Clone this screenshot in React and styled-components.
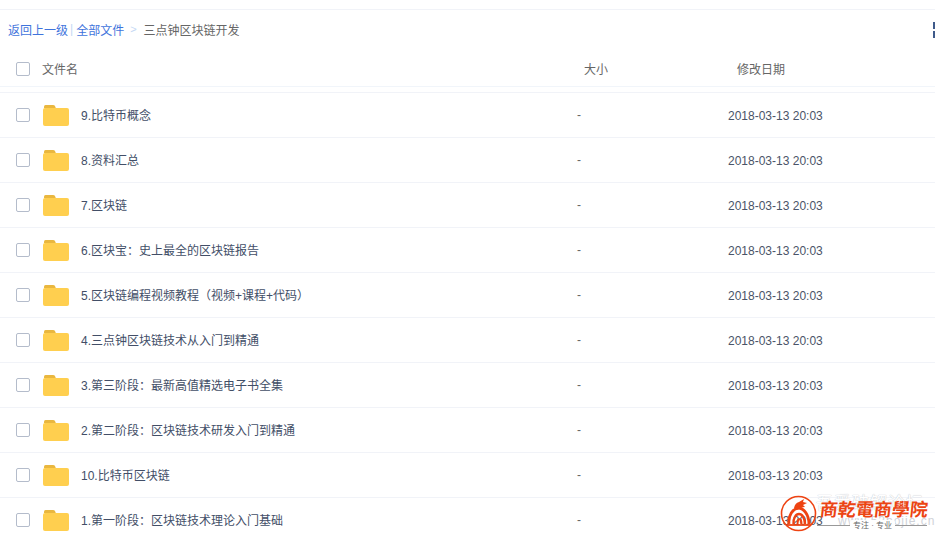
import React from "react";
import styled, { createGlobalStyle } from "styled-components";

const Global = createGlobalStyle`
  html, body { margin: 0; padding: 0; background: #fff; height: 539px; overflow: hidden; }
  body { font-family: "Liberation Sans", "Noto Sans CJK SC", sans-serif; }
`;
const Page = styled.div`
  position: relative; width: 935px; height: 539px; overflow: hidden; padding-top: 9px; box-sizing: border-box;
`;
const TopRule = styled.div`height: 1px; background: #f1f3f8;`;
const Crumbs = styled.div`
  height: 40px; box-sizing: border-box; padding: 0 0 2px 8px; display: flex; align-items: center; font-size: 12px; color: #666; position: relative;
`;
const CrumbLink = styled.span`color: #3f74dc;`;
const Bar = styled.span`color: #c4d8f4; margin: 0 3px 0 2px; font-size: 12px;`;
const Chevron = styled.span`color: #c4d8f4; margin: 0 7px 0 6px; font-size: 11px; font-family: "Liberation Sans", sans-serif;`;
const Grip = styled.div`
  position: absolute; right: 0; top: 12px; width: 2px; height: 16px;
  display: flex; flex-direction: column; justify-content: space-between;
  & > i { display: block; height: 7px; background: #3f5a8a; }
`;
const HeaderRow = styled.div`
  height: 36px; display: grid; grid-template-columns: 42px 542px 153px 1fr; align-items: center;
  font-size: 12px; color: #666; border-bottom: 1px solid #f1f5fa;
`;
const Gap = styled.div`height: 5px;`;
const Rule2 = styled.div`height: 1px; background: #f1f3f8;`;
const Row = styled.div`
  height: 44px; display: grid; grid-template-columns: 43px 38px 496px 151px 1fr; align-items: center;
  border-bottom: 1px solid #f1f3f8; font-size: 12px; color: #424e67; flex: none;
`;
const Box = styled.span`
  display: block; width: 14px; height: 14px; box-sizing: border-box; margin: ${(p) => (p.$head ? "2px" : "0")} 0 0 16px;
  border: 1px solid #b4bccb; border-radius: 2px; background: #fff;
`;
const HeadCell = styled.span`white-space: nowrap;`;
const Name = styled.span`white-space: nowrap; padding-bottom: 2px;`;
const DateCell = styled.span`white-space: nowrap; padding-top: 1px; color: #4a5468;`;
const Dash = styled.span`color: #666;`;

const Folder = () => (
  <svg width="26" height="21" viewBox="0 0 26 21" style={{ display: "block" }}>
    <path d="M1 3 V1.5 Q1 0 2.5 0 H10 Q11.5 0 12 1 L12.8 3 Z" fill="#e9b73f" />
    <path d="M0 5 Q0 3 2 3 H24 Q26 3 26 5 V19 Q26 21 24 21 H2 Q0 21 0 19 Z" fill="#ffcf4f" />
  </svg>
);

const Logo = styled.div`
  position: absolute; left: 780px; top: 494px; width: 155px; height: 45px;
`;
const Ghost = styled.div`
  position: absolute; left: 36px; top: -5px; font-size: 17px; letter-spacing: 1px; color: #fff; white-space: nowrap;
  text-shadow: 0 0 1px #c9ccd3, 0 0 1px #c9ccd3;
`;
const Brand = styled.div`
  position: absolute; left: 40px; top: 2px; font-family: "Noto Sans CJK TC", "Noto Sans CJK SC", sans-serif;
  font-size: 18px; font-weight: 700; line-height: 24px; color: #ec4412; white-space: nowrap;
  transform: skewX(-6deg);
`;
const Url = styled.div`
  position: absolute; left: 58px; top: 20px; font-size: 12px; color: #cfd2d8; white-space: nowrap; letter-spacing: 1px;
`;
const Slogan = styled.div`
  position: absolute; left: 37px; top: 26px; width: 110px; display: flex; align-items: center;
  font-size: 8px; line-height: 11px; color: #666; white-space: nowrap;
  & > span { background: #fff; padding: 0 3px; border-radius: 2px; }
  &::before, &::after { content: ""; height: 1px; background: #999; }
  &::before { width: 33px; } &::after { flex: 1; }
`;
const Seal = () => (
  <svg width="37" height="37" viewBox="0 0 37 37" style={{ position: "absolute", left: 0, top: 1 }}>
    <circle cx="18.5" cy="18.5" r="17" fill="none" stroke="#ee4312" strokeWidth="1.6" />
    <path d="M14 13 Q15 8 19 7 L24 4 L23 7 L27 8 L23 10 L25 12 Q20 12 18 15 Z" fill="#ee4312" />
    <path d="M9 29 C8 20 13 14 18 13 C24 13 29 20 29 29" fill="none" stroke="#ee4312" strokeWidth="2.8" />
    <path d="M13.500 29 C13 23 16 19 19 19 C22 19 25 23 25 29" fill="none" stroke="#ee4312" strokeWidth="2.4" />
    <path d="M17.500 29 C17.500 26 18.500 24 19.500 24 C20.500 24 21.500 26 21.500 29" fill="none" stroke="#ee4312" strokeWidth="2" />
    <path d="M7 30 H31" stroke="#ee4312" strokeWidth="1.8" />
  </svg>
);

const names = [
  "9.比特币概念",
  "8.资料汇总",
  "7.区块链",
  "6.区块宝：史上最全的区块链报告",
  "5.区块链编程视频教程（视频+课程+代码）",
  "4.三点钟区块链技术从入门到精通",
  "3.第三阶段：最新高值精选电子书全集",
  "2.第二阶段：区块链技术研发入门到精通",
  "10.比特币区块链",
  "1.第一阶段：区块链技术理论入门基础",
];

export default function App() {
  return (
    <Page>
      <Global />
      <TopRule />
      <Crumbs>
        <CrumbLink>返回上一级</CrumbLink>
        <Bar>|</Bar>
        <CrumbLink>全部文件</CrumbLink>
        <Chevron>&gt;</Chevron>
        <span>三点钟区块链开发</span>
        <Grip><i /><i /></Grip>
      </Crumbs>
      <HeaderRow>
        <Box $head />
        <HeadCell>文件名</HeadCell>
        <HeadCell>大小</HeadCell>
        <HeadCell>修改日期</HeadCell>
      </HeaderRow>
      <Gap />
      <Rule2 />
      {names.map((n) => (
        <Row key={n}>
          <Box />
          <Folder />
          <Name>{n}</Name>
          <Dash>-</Dash>
          <DateCell>2018-03-13 20:03</DateCell>
        </Row>
      ))}
      <Logo>
        <Ghost>吾爱破解论坛</Ghost>
        <Url>www.52pojie.cn</Url>
        <Seal />
        <Brand>商乾電商學院</Brand>
        <Slogan><span>专注 · 专业</span></Slogan>
      </Logo>
    </Page>
  );
}
